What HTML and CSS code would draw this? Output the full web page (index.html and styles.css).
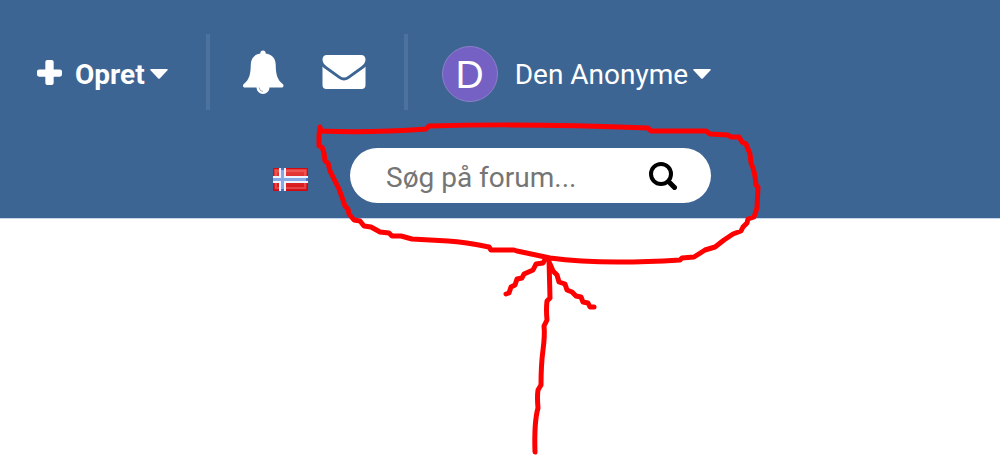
FILE: index.html
```html
<!DOCTYPE html>
<html lang="da">

<head>
    <meta charset="UTF-8">
    <meta name="viewport" content="width=device-width, initial-scale=1.0">
    <title>Forum</title>
    <link rel="stylesheet" href="styles.css">
</head>

<body>
    <header class="header">
        <!-- User navigation -->
        <nav class="user-nav">
            <div class="nav-group nav-create">
                <button type="button" class="nav-button create-button">
                    <svg class="icon-plus" viewBox="0 0 24 24" aria-hidden="true">
                        <path d="M10 0h4q2 0 2 2v7h6q2 0 2 2v3q0 2-2 2h-6v6q0 2-2 2h-4q-2 0-2-2v-6H2q-2 0-2-2v-3q0-2 2-2h6V2q0-2 2-2z" />
                    </svg>
                    <span class="create-label">Opret</span>
                    <svg class="icon-caret" viewBox="0 0 18 10" aria-hidden="true">
                        <path d="M1 0h16q1.500 0 .5 1.200l-7.500 8q-1 1-2 0l-7.500-8Q-.5 0 1 0z" />
                    </svg>
                </button>
            </div>
            <div class="nav-group nav-alerts">
                <button type="button" class="nav-button" aria-label="Notifikationer">
                    <svg class="icon-bell" viewBox="0 0 42 44" aria-hidden="true">
                        <path d="M21 .5c1.800 0 2.900 1.300 2.600 3.100C30 4.600 33.500 8.500 33.700 14.500c.2 9.500 1.300 15 7 19.500 1.500 1.300.8 3.500-1.200 3.500H27.500a6.500 6.500 0 0 1-13 0H3c-2 0-2.700-2.200-1.200-3.500 5.700-4.500 6.800-10 7-19.500C9 8.500 12 4.600 18.400 3.600 18.100 1.800 19.200.5 21 .5z" />
                        <path class="clapper" d="M17 37.500q.5 3.700 4 4" />
                    </svg>
                </button>
                <button type="button" class="nav-button" aria-label="Beskeder">
                    <svg class="icon-mail" viewBox="0 0 44 34" aria-hidden="true">
                        <path d="M5 0h34c3 0 4.500 2 4.500 4.500S42 9.500 39.500 11.300L26 21q-4 3-8 0L4.500 11.300C2 9.500.5 7 .5 4.500S2 0 5 0z" />
                        <path d="M.5 11.500q1 1.200 2.500 2.200l14 10q5 3.500 10 0l14-10q1.500-1 2.500-2.200V30q0 4-4 4h-35q-4 0-4-4z" />
                    </svg>
                </button>
            </div>
            <div class="nav-group nav-user">
                <button type="button" class="nav-button">
                    <span class="avatar">D</span>
                    <span class="user-name">Den Anonyme</span>
                    <svg class="icon-caret" viewBox="0 0 18 10" aria-hidden="true">
                        <path d="M1 0h16q1.500 0 .5 1.200l-7.500 8q-1 1-2 0l-7.500-8Q-.5 0 1 0z" />
                    </svg>
                </button>
            </div>
        </nav>

        <!-- Language and search -->
        <div class="tools">
            <a class="language" href="#" aria-label="Norsk">
                <svg class="flag" viewBox="0 0 35 23" aria-hidden="true">
                    <defs>
                        <linearGradient id="flag-red" x1="0" y1="0" x2="0" y2="1">
                            <stop offset="0" stop-color="#e8403c" />
                            <stop offset="1" stop-color="#d4141a" />
                        </linearGradient>
                    </defs>
                    <path fill="#d00a12" d="M0 0h35v23H0z" />
                    <path fill="url(#flag-red)" d="M1 1h33v21H1z" />
                    <path fill="none" stroke="#f07070" stroke-width="2" stroke-opacity=".5" d="M7 3H3v6M13 3h19v6M3 15v5h4M13 20h19v-5" />
                    <path fill="#edf3ff" d="M6 0h7v23H6zM0 8h35v7H0z" />
                    <path fill="#86a9e4" d="M8 0h3v23H8zM0 10h35v3H0z" />
                    <path fill="#4b6fd0" d="M8 0h3v2H8zM8 21h3v2H8zM33 10h2v3h-2z" />
                </svg>
            </a>
            <form class="search" role="search">
                <input type="text" class="search-input" name="q" placeholder="Søg på forum..." aria-label="Søg på forum">
                <button type="submit" class="search-button" aria-label="Søg">
                    <svg class="icon-search" viewBox="0 0 28 28" aria-hidden="true">
                        <circle cx="12" cy="12" r="10" />
                        <path d="M19.500 19.500l6 6" />
                    </svg>
                </button>
            </form>
        </div>
    </header>

    <!-- Hand-drawn circle and arrow round the search box -->
    <svg class="marker" viewBox="0 0 1000 455" aria-hidden="true">
        <path d="M320 127L321 131Q370 133 426 129L429 126Q530 123 648 128L651 131L706 131L710 134L728 135L731 137L739 137L742 142L746 144L750 154L751 163Q755 171 756 185L758 187L757 208L754 217L748 219L747 223L743 227L741 231L733 234L724 240L715 247L705 250L694 257L682 258L680 260Q600 265 550 258L517 251L514 250L491 250L489 247Q465 242 448 241L412 239L401 236L392 236L389 233L380 232L371 227L364 226L360 221L354 220L349 214L348 209L345 206L343 200L339 189L336 183L333 177L330 171L328 163L325 161L324 153L322 147L319 146L319 135Z" />
        <path d="M549 259L550 298L547 301Q546 309 547 320L544 326Q545 335 543 350Q541 365 541 385L538 390Q537 397 538 408Q534 422 535 452" />
        <path d="M546 258L543 263L536 264L533 270L524 274L522 278L517 279L515 285L511 287L509 293L506 294" />
        <path d="M550 264L553 271L557 275L559 282L565 284L567 290L572 292L576 296L581 297L583 302L588 303L590 307L594 307" />
    </svg>
</body>

</html>
```

FILE: styles.css
```css
* {
    box-sizing: border-box;
}

body {
    margin: 0;
    background-color: white;
    color: white;
    font-family: Roboto, Arial, sans-serif;
    font-size: 28px;
    line-height: 32px;
}

.header {
    padding: 34px 37px 15px;
    background-color: #3d6594;
    border-bottom: 1px solid #c5d4e8;
}

button {
    padding: 0;
    border: none;
    background: none;
    color: inherit;
    font: inherit;
    cursor: pointer;
}

svg {
    display: block;
    flex: none;
    fill: currentColor;
}

/* User navigation */
.user-nav {
    display: flex;
    height: 76px;
}

.nav-group {
    display: flex;
    align-items: center;
    border-right: 4px solid #4d729e;
}

.nav-create {
    padding-right: 38px;
}

.nav-alerts {
    gap: 38px;
    padding: 0 38px 0 32px;
}

.nav-user {
    padding: 4px 0 0 34px;
    border-right: none;
}

.nav-button {
    display: flex;
    align-items: center;
}

.create-button {
    padding-top: 4px;
}

.create-label {
    margin: 0 5px 0 13px;
    padding-top: 2px;
    font-weight: bold;
}

.icon-plus {
    width: 25px;
    height: 25px;
    margin-bottom: 4px;
}

.icon-caret {
    width: 18px;
    height: 10px;
}

.icon-bell {
    width: 42px;
    height: 44px;
}

.icon-bell .clapper {
    fill: none;
    stroke: #9db2cb;
    stroke-width: 1;
}

.icon-mail {
    width: 44px;
    height: 34px;
}

.avatar {
    width: 56px;
    height: 56px;
    border: 1px solid #8c80c8;
    border-radius: 50%;
    background-color: #7561c4;
    font-family: "Liberation Sans", Arial, sans-serif;
    font-size: 39px;
    line-height: 56px;
    text-align: center;
}

.user-name {
    margin: 0 5px 0 17px;
    padding-top: 2px;
}

/* Language and search */
.tools {
    display: flex;
    align-items: center;
    gap: 42px;
    margin-top: 38px;
    padding-left: 236px;
}

.language {
    padding-top: 8px;
}

.flag {
    width: 35px;
    height: 23px;
}

.search {
    display: flex;
    align-items: center;
    width: 361px;
    height: 55px;
    padding: 0 34px 0 36px;
    border-radius: 28px;
    background-color: white;
}

.search-input {
    flex: 1;
    min-width: 0;
    padding: 4px 0 0;
    border: none;
    outline: none;
    background: none;
    color: black;
    font: inherit;
}

.search-input::placeholder {
    color: #757575;
}

.search-button {
    color: black;
}

.icon-search {
    width: 28px;
    height: 28px;
    fill: none;
    stroke: currentColor;
    stroke-width: 4;
    stroke-linecap: round;
}

.icon-search path {
    stroke-width: 5;
}

/* Red pen drawing on top of the page */
.marker {
    position: absolute;
    top: 0;
    left: 0;
    width: 1000px;
    height: 455px;
    fill: none;
    stroke: #ff0000;
    stroke-width: 5;
    stroke-linecap: round;
    stroke-linejoin: round;
    pointer-events: none;
}
```
